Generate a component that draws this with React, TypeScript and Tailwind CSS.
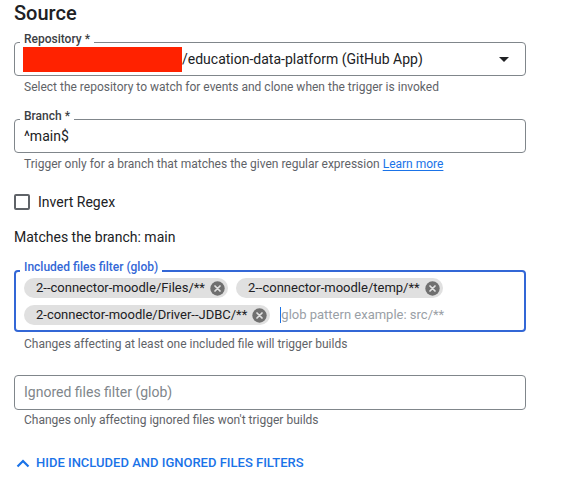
import React from "react";

function CancelIcon() {
  return (
    <svg width="15" height="15" viewBox="0 0 24 24" className="shrink-0">
      <circle cx="12" cy="12" r="11.5" fill="#6f6f6f" />
      <path d="M8 8 L16 16 M16 8 L8 16" stroke="#e0e0e0" strokeWidth="2.8" strokeLinecap="round" />
    </svg>
  );
}

function Chip({ text }: { text: string }) {
  return (
    <div className="flex h-[20px] items-center gap-[5px] rounded-full bg-[#e0e0e0] pl-[12px] pr-[3px] text-[13px] leading-[20px] text-[#202124]">
      <span>{text}</span>
      <CancelIcon />
    </div>
  );
}

export default function App() {
  return (
    <div
      className="w-[565px] h-[483px] bg-white pl-[14px] pt-[1px]"
      style={{ fontFamily: "Roboto, 'Liberation Sans', sans-serif" }}
    >
      <h1 className="text-[20px] leading-[24px] font-medium text-[#202124]">Source</h1>

      {/* Repository */}
      <div className="relative mt-[17px] flex h-[34px] w-[512px] items-center rounded-[4px] border border-[#80868b] pl-[8px] pr-[16px]">
        <span className="absolute left-[5px] top-[-10px] bg-white px-[4px] text-[12px] leading-[12px] font-medium text-[#3c4043]">
          Repository *
        </span>
        <div className="flex flex-1 items-center text-[14px] text-[#202124]">
          <span className="inline-block h-[25px] w-[159px] bg-[#ff2200]" />
          <span>/education-data-platform (GitHub App)</span>
        </div>
        <svg width="10" height="5" viewBox="0 0 10 5">
          <path d="M0 0 L10 0 L5 5 Z" fill="#202124" />
        </svg>
      </div>
      <p className="mt-[3px] pl-[10px] text-[12px] leading-[16px] text-[#5f6368]">
        Select the repository to watch for events and clone when the trigger is invoked
      </p>

      {/* Branch */}
      <div className="relative mt-[24px] flex h-[34px] w-[512px] items-center rounded-[4px] border border-[#80868b] pl-[9px]">
        <span className="absolute left-[5px] top-[-10px] bg-white px-[4px] text-[12px] leading-[12px] font-medium text-[#3c4043]">
          Branch *
        </span>
        <span className="text-[14px] text-[#202124]">^main$</span>
      </div>
      <p className="mt-[3px] pl-[10px] text-[12px] leading-[16px] text-[#5f6368]">
        Trigger only for a branch that matches the given regular expression{" "}
        <span className="text-[#1a73e8] underline underline-offset-2">Learn more</span>
      </p>

      {/* Checkbox */}
      <div className="mt-[22px] flex items-center gap-[8px]">
        <div className="h-[16px] w-[16px] rounded-[2px] border-2 border-[#5f6368]" />
        <span className="text-[14px] leading-[16px] text-[#202124]">Invert Regex</span>
      </div>

      <p className="mt-[17px] text-[14px] leading-[20px] text-[#202124]">Matches the branch: main</p>

      {/* Included files */}
      <div className="relative mt-[23px] w-[512px] rounded-[4px] border-2 border-[#3367d6] px-[8px] pt-[6px] pb-[5px]">
        <span className="absolute left-[4px] top-[-11px] bg-white px-[4px] text-[12px] leading-[12px] font-medium text-[#3367d6]">
          Included files filter (glob)
        </span>
        <div className="flex flex-wrap items-center gap-x-[8px] gap-y-[7px]">
          <Chip text="2--connector-moodle/Files/**" />
          <Chip text="2--connector-moodle/temp/**" />
          <Chip text="2-connector-moodle/Driver--JDBC/**" />
          <div className="ml-[2px] flex items-center">
            <span className="h-[16px] w-[1px] bg-[#1a73e8]" />
            <span className="text-[13px] leading-[20px] text-[#9aa0a6]">glob pattern example: src/**</span>
          </div>
        </div>
      </div>
      <p className="mt-[4px] pl-[10px] text-[12px] leading-[16px] text-[#5f6368]">
        Changes affecting at least one included file will trigger builds
      </p>

      {/* Ignored */}
      <div className="mt-[23px] flex h-[35px] w-[512px] items-center rounded-[4px] border border-[#80868b] pl-[9px]">
        <span className="text-[14px] text-[#80868b]">Ignored files filter (glob)</span>
      </div>
      <p className="mt-[2px] pl-[10px] text-[12px] leading-[16px] text-[#5f6368]">
        Changes only affecting ignored files won't trigger builds
      </p>

      {/* Hide link */}
      <div className="mt-[27px] flex items-center gap-[6px] pl-[2px] text-[#1a73e8]">
        <svg width="14" height="9" viewBox="0 0 14 9">
          <path d="M1.5 7.5 L7 2 L12.5 7.5" fill="none" stroke="#1a73e8" strokeWidth="2.2" />
        </svg>
        <span className="text-[13px] leading-[16px] font-medium uppercase">
          Hide included and ignored files filters
        </span>
      </div>
    </div>
  );
}
